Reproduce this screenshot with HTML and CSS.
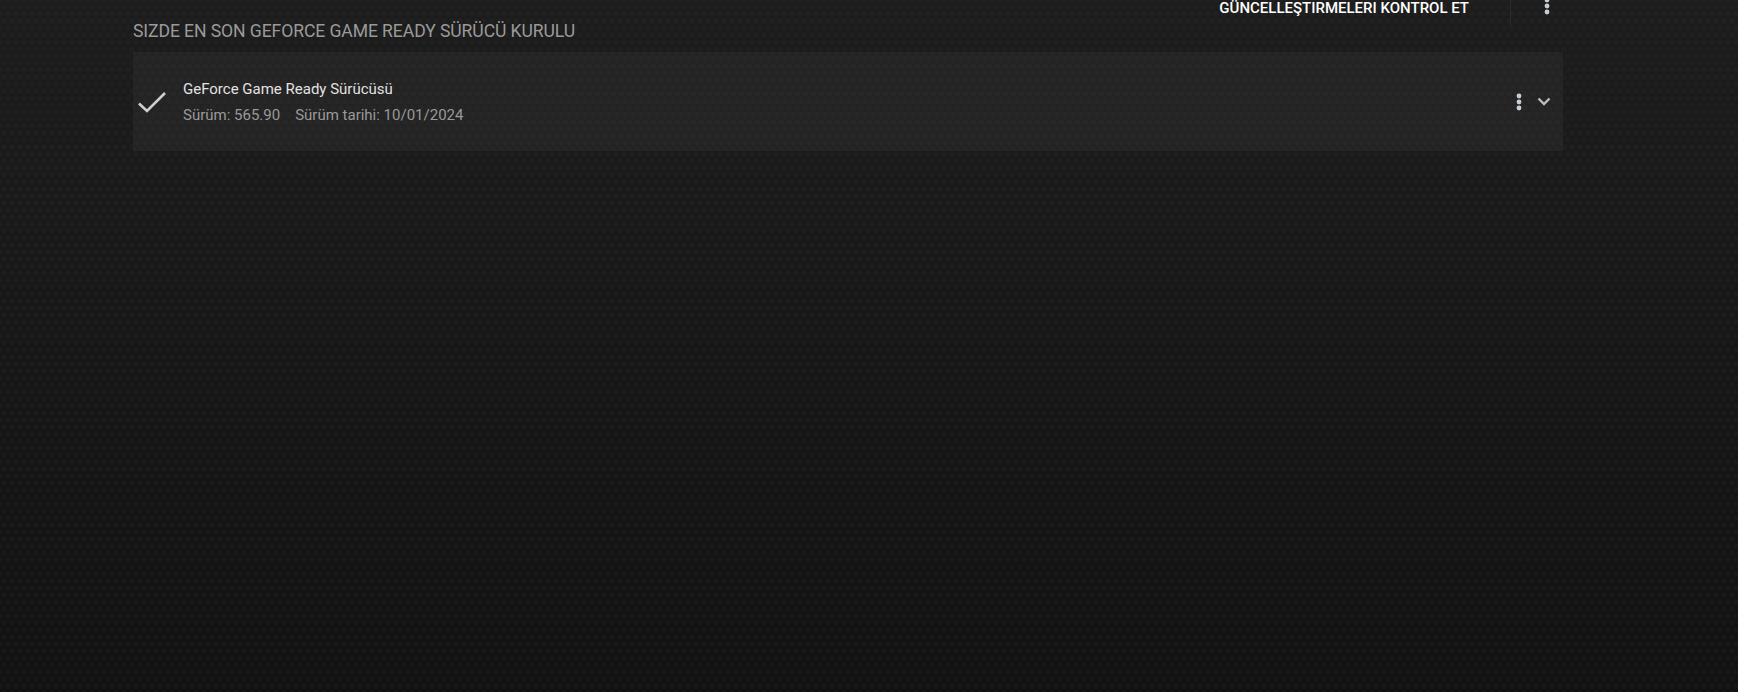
FILE: index.html
```html
<!DOCTYPE html>
<html lang="tr">
<head>
    <meta charset="UTF-8"/>
    <meta name="viewport" content="width=device-width, initial-scale=1.0"/>
    <title>Sürücüler</title>
    <link rel="stylesheet" href="styles.css">
</head>
<body>
<main class="drivers">
    <header class="drivers-header">
        <h2 class="drivers-title">SIZDE EN SON GEFORCE GAME READY SÜRÜCÜ KURULU</h2>
        <div class="drivers-actions">
            <button class="check-btn">GÜNCELLEŞTIRMELERI KONTROL ET</button>
            <span class="divider"></span>
            <button class="more-btn" aria-label="Diğer">
                <svg width="6" height="18" viewBox="0 0 6 18">
                    <circle cx="3" cy="3" r="2.4"/>
                    <circle cx="3" cy="9" r="2.4"/>
                    <circle cx="3" cy="15" r="2.4"/>
                </svg>
            </button>
        </div>
    </header>

    <section class="driver-card">
        <div class="driver-status">
            <svg width="32" height="24" viewBox="0 0 32 24">
                <path d="M2 13.5 L10 21 L28 3" fill="none" stroke="#cfcfcf" stroke-width="2.6"/>
            </svg>
        </div>
        <div class="driver-info">
            <div class="driver-name">GeForce Game Ready Sürücüsü</div>
            <div class="driver-meta">
                <span>Sürüm: 565.90</span>
                <span>Sürüm tarihi: 10/01/2024</span>
            </div>
        </div>
        <div class="driver-tools">
            <button class="more-btn small" aria-label="Diğer">
                <svg width="6" height="18" viewBox="0 0 6 18">
                    <circle cx="3" cy="3" r="2.4"/>
                    <circle cx="3" cy="9" r="2.4"/>
                    <circle cx="3" cy="15" r="2.4"/>
                </svg>
            </button>
            <button class="expand-btn" aria-label="Genişlet">
                <svg width="14" height="9" viewBox="0 0 14 9">
                    <path d="M1.5 1.5 L7 7 L12.5 1.5" fill="none" stroke="#bdbdbd" stroke-width="2.4"/>
                </svg>
            </button>
        </div>
    </section>
</main>
</body>
</html>
```

FILE: styles.css
```css
* {
    margin: 0;
    padding: 0;
    box-sizing: border-box;
}

html, body {
    height: 100%;
}

body {
    font-family: Roboto, "Noto Sans", Arial, sans-serif;
    color: #ddd;
    background-color: #141414;
    background-image:
        radial-gradient(circle, rgba(255, 255, 255, 0.018) 2.6px, transparent 3.2px),
        radial-gradient(circle, rgba(255, 255, 255, 0.018) 2.6px, transparent 3.2px),
        linear-gradient(180deg, #1c1c1c 0%, #161616 50%, #111 100%);
    background-size: 8px 14px, 8px 14px, 100% 100%;
    background-position: 0 0, 4px 7px, 0 0;
    overflow: hidden;
}

.drivers {
    padding: 0 175px 0 133px;
}

.drivers-header {
    display: flex;
    justify-content: space-between;
    height: 52px;
}

.drivers-title {
    align-self: flex-end;
    font-size: 17.6px;
    font-weight: 400;
    line-height: 21px;
    color: #9a9a9a;
    padding-bottom: 10px;
    letter-spacing: -0.1px;
}

.drivers-actions {
    display: flex;
    align-items: flex-start;
    height: 25px;
}

.check-btn {
    background: none;
    border: 0;
    font-family: Roboto, "Noto Sans", Arial, sans-serif;
    font-size: 15px;
    font-weight: 500;
    line-height: 16px;
    color: #fff;
    margin-top: 0;
    cursor: pointer;
}

.divider {
    width: 1px;
    height: 25px;
    background: #2c2c2c;
    margin: 0 33px 0 41px;
}

.more-btn {
    background: none;
    border: 0;
    fill: #c8cdd4;
    display: flex;
    cursor: pointer;
    margin-top: -3px;
    margin-right: 13px;
}

.more-btn.small {
    margin: 0;
}

.driver-card {
    display: flex;
    align-items: center;
    height: 99px;
    background: #232323;
    background-image:
        radial-gradient(circle, rgba(255, 255, 255, 0.015) 2.6px, transparent 3.2px),
        radial-gradient(circle, rgba(255, 255, 255, 0.015) 2.6px, transparent 3.2px);
    background-size: 8px 14px, 8px 14px;
    background-position: 0 0, 4px 7px;
}

.driver-status {
    width: 50px;
    padding-left: 4px;
    display: flex;
    align-items: center;
    padding-top: 1px;
}

.driver-info {
    flex: 1;
}

.driver-name {
    font-size: 15px;
    line-height: 20px;
    color: #e2e2e2;
}

.driver-meta {
    margin-top: 6px;
    font-size: 15px;
    line-height: 20px;
    color: #9a9a9a;
    display: flex;
    gap: 15px;
}

.driver-tools {
    display: flex;
    align-items: center;
    gap: 15px;
    padding-right: 12px;
}

.expand-btn {
    background: none;
    border: 0;
    display: flex;
    cursor: pointer;
}
```
